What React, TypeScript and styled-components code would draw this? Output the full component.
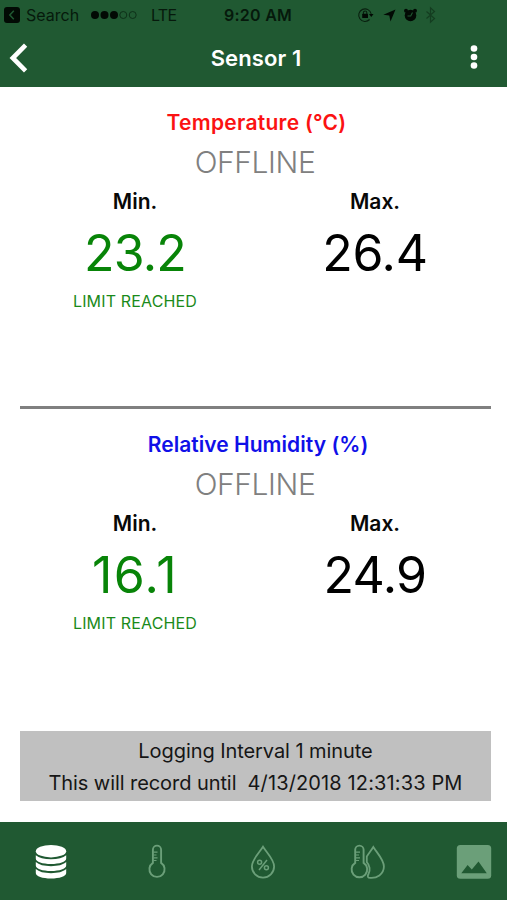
import React from "react";
import styled, { createGlobalStyle } from "styled-components";

const GREEN = "#205932";
const MUTED = "#6b9f79";

const GlobalStyle = createGlobalStyle`
  * { box-sizing: border-box; }
  body { margin: 0; background: #fff; font-family: Inter, "Liberation Sans", sans-serif; }
`;

const Screen = styled.div`
  width: 507px;
  height: 900px;
  display: flex;
  flex-direction: column;
  background: #fff;
  overflow: hidden;
`;

const Header = styled.header`
  height: 87px;
  flex: none;
  background: ${GREEN};
`;

const StatusText = styled.span<{ $spacing?: number; $bold?: boolean }>`
  font-size: 16px;
  line-height: 30px;
  font-weight: ${(p) => (p.$bold ? 600 : 400)};
  letter-spacing: ${(p) => p.$spacing ?? 0}px;
  white-space: nowrap;
`;

const StatusRow = styled.div`
  height: 30px;
  display: flex;
  align-items: center;
  padding-left: 4px;
  color: #06190c;
`;

const StatusSlot = styled.div<{ $width: number }>`
  width: ${(p) => p.$width}px;
  flex: none;
  display: flex;
  align-items: center;
`;

const NavBar = styled.div`
  height: 57px;
  display: grid;
  grid-template-columns: 60px 1fr 60px;
  align-items: center;
`;

const NavButton = styled.button<{ $end?: boolean }>`
  display: flex;
  align-items: center;
  justify-content: ${(p) => (p.$end ? "flex-end" : "flex-start")};
  height: 57px;
  padding: ${(p) => (p.$end ? "0 29px 3px 0" : "0 0 2px 8px")};
  border: 0;
  background: none;
`;

const Title = styled.h1`
  margin: 0;
  padding: 0 0 1px 5px;
  text-align: center;
  color: #fff;
  font-size: 22px;
  font-weight: 600;
  line-height: 30px;
  letter-spacing: 0.1px;
`;

const Main = styled.main`
  flex: 1;
  display: flex;
  flex-direction: column;
`;

const Reading = styled.section`
  height: 319px;
  padding: 20px 12px 0 15px;
  text-align: center;
`;

const ReadingTitle = styled.h2<{ $color: string; $spacing: number; $indent: number }>`
  margin: 0;
  padding-left: ${(p) => p.$indent}px;
  color: ${(p) => p.$color};
  font-size: 21px;
  font-weight: 600;
  line-height: 31px;
  letter-spacing: ${(p) => p.$spacing}px;
`;

const State = styled.p`
  margin: 0;
  color: #808080;
  font-size: 30px;
  font-weight: 300;
  line-height: 48px;
  letter-spacing: -0.4px;
`;

const Limits = styled.div`
  display: grid;
  grid-template-columns: 1fr 1fr;
`;

const Limit = styled.div`
  display: flex;
  flex-direction: column;
  align-items: center;
`;

const LimitName = styled.span`
  font-size: 21px;
  font-weight: 600;
  line-height: 32px;
  color: #080808;
`;

const LimitValue = styled.span<{ $reached?: boolean; $spacing: number }>`
  font-size: 50px;
  line-height: 70px;
  color: ${(p) => (p.$reached ? "#088408" : "#000")};
  letter-spacing: ${(p) => p.$spacing}px;
`;

const LimitNote = styled.span`
  font-size: 16px;
  line-height: 27px;
  color: #1a8a1a;
  letter-spacing: 0.16px;
`;

const Divider = styled.hr`
  width: 471px;
  height: 3px;
  margin: 0 0 0 20px;
  border: 0;
  background: #808080;
`;

const LogBox = styled.div`
  margin: 3px 16px 0 20px;
  height: 70px;
  padding: 4px 0 0;
  background: #c0c0c0;
  color: #161616;
  text-align: center;
`;

const LogLine = styled.p`
  margin: 0;
  font-size: 20px;
  line-height: 32px;
  white-space: pre;
  letter-spacing: -0.07px;
`;

const LogTime = styled.time`
  letter-spacing: 0.13px;
`;

const TabBar = styled.nav`
  height: 78px;
  flex: none;
  display: flex;
  justify-content: space-between;
  padding: 0 13px 0 31px;
  background: ${GREEN};
`;

const Tab = styled.button`
  display: flex;
  align-items: center;
  justify-content: center;
  width: 40px;
  padding: 1px 0 0;
  border: 0;
  background: none;
`;

const BackTile = () => (
  <svg width="16" height="16" viewBox="0 0 16 16">
    <rect width="16" height="16" rx="3" fill="#020a04" />
    <path d="M9.8 3.8 5.8 8l4 4.2" fill="none" stroke={GREEN} strokeWidth="1.5" />
  </svg>
);

const SignalDots = () => (
  <svg width="48" height="10" viewBox="0 0 48 10">
    <g fill="#020a04">
      <circle cx="5" cy="5" r="4" />
      <circle cx="14.5" cy="5" r="4" />
      <circle cx="24" cy="5" r="4" />
    </g>
    <g fill="none" stroke="#0d3018">
      <circle cx="33.3" cy="5" r="3.5" />
      <circle cx="42.7" cy="5" r="3.5" />
    </g>
  </svg>
);

const StatusIcons = () => (
  <svg width="80" height="18" viewBox="0 0 80 18">
    <g fill="none" stroke="#09200f">
      <path d="M12.6 13.5A6.3 6.3 0 1 1 14.2 8" strokeWidth="1.1" />
      <path d="M6.4 8V6.7a1.7 1.7 0 0 1 3.4 0V8" strokeWidth="1.1" />
      <path d="m69.500 5.500 8 7-4 3.700V1.800l4 3.700-8 7" stroke="#143d20" strokeWidth="1.2" />
    </g>
    <g fill="#020a04">
      <path d="M12 8h4.5l-2.2 3z" />
      <rect x="5.2" y="7.8" width="5.8" height="4.2" rx=".5" />
      <path d="m38.5 3.5-5 12-1.2-6-6-.7z" />
      <circle cx="53.500" cy="9.5" r="5.8" />
      <circle cx="49" cy="4.8" r="2" />
      <circle cx="58" cy="4.8" r="2" />
    </g>
    <path d="M50.500 10h3.200l1.800-3.500" fill="none" stroke={GREEN} strokeWidth="1.1" />
  </svg>
);

const BackArrow = () => (
  <svg width="22" height="32" viewBox="0 0 22 32">
    <path d="M17.600 3.200 4.800 16l12.800 12.800" fill="none" stroke="#fff" strokeWidth="4.600" />
  </svg>
);

const MoreDots = () => (
  <svg width="8" height="26" viewBox="0 0 8 26" fill="#fff">
    <circle cx="4" cy="4.5" r="3.3" />
    <circle cx="4" cy="13" r="3.3" />
    <circle cx="4" cy="21.5" r="3.3" />
  </svg>
);

const DatabaseIcon = () => (
  <svg width="32" height="36" viewBox="0 0 32 36" fill="#fff">
    <ellipse cx="16" cy="7.2" rx="15.2" ry="6.2" />
    <path d="M.8 11.2C4 14 9 15.2 16 15.2s12-1.2 15.2-4v3.3c0 3.4-6.8 5.5-15.2 5.5S.8 17.900.8 14.500z" />
    <path d="M.8 18.100C4 21 9 22.200 16 22.200s12-1.200 15.200-4.100v3.300c0 3.400-6.800 5.500-15.200 5.500S.8 24.800.8 21.400z" />
    <path d="M.8 25.100C4 28 9 29.200 16 29.200s12-1.200 15.200-4.100v3.900c0 3.400-6.800 5.500-15.200 5.500S.8 32.400.8 29z" />
  </svg>
);

const ThermometerIcon = () => (
  <svg width="20" height="36" viewBox="0 0 20 36" fill="none" stroke={MUTED}>
    <path d="M5.900 18.900V5.700a4.100 4.100 0 0 1 8.200 0v13.200a7.600 7.600 0 1 1-8.200 0z" strokeWidth="1.900" />
    <path d="M6.500 8.200h4M6.500 11h3M6.500 13.800h4M6.500 16.500h3" strokeWidth="1.200" />
  </svg>
);

const HumidityIcon = () => (
  <svg width="26" height="36" viewBox="0 0 26 36" fill="none" stroke={MUTED}>
    <path d="M13 2.800C9.500 8.500 1.900 15.500 1.900 22.500a11.100 11.100 0 0 0 22.200 0C24.100 15.500 16.500 8.500 13 2.800z" strokeWidth="1.800" />
    <g strokeWidth="1.500">
      <circle cx="9.600" cy="18.300" r="2" />
      <circle cx="16.400" cy="23.700" r="2" />
      <path d="m17 16-8 10" />
    </g>
  </svg>
);

const CombinedIcon = () => (
  <svg width="36" height="36" viewBox="0 0 36 36" fill="none" stroke={MUTED}>
    <path d="M5.200 18.900V5.800a4.200 4.200 0 0 1 8.400 0v13.100a7.800 7.800 0 1 1-8.400 0z" strokeWidth="1.900" />
    <path d="M6 8.200h4M6 11h3M6 13.800h4M6 16.500h3" strokeWidth="1.200" />
    <path d="M23.300 3c-2.200 3.500-4.500 6.300-6.500 9.400v5.700c3 3 3.800 8.500 1.600 12.200-.8 1.300-.8 2.900.2 3.300 8.300 1.400 15.300-3.500 15.300-11C33.900 15.500 27 9 23.300 3z" strokeWidth="1.800" />
  </svg>
);

const PictureIcon = () => (
  <svg width="36" height="36" viewBox="0 0 36 36">
    <rect x=".8" y="1" width="34.400" height="33.700" rx="3.500" fill={MUTED} />
    <path d="m5.300 29.200 6.300-8.300 4.200 4.600 6.700-7.900 8.300 11.600z" fill={GREEN} />
  </svg>
);

interface ReadingData {
  title: string;
  color: string;
  titleSpacing: number;
  titleIndent: number;
  min: string;
  max: string;
  minSpacing: number;
  maxSpacing: number;
}

const readings: ReadingData[] = [
  {
    title: "Temperature (°C)",
    color: "#fb1212",
    titleSpacing: 0.27,
    titleIndent: 3,
    min: "23.2",
    max: "26.4",
    minSpacing: -0.8,
    maxSpacing: -0.2,
  },
  {
    title: "Relative Humidity (%)",
    color: "#1010e8",
    titleSpacing: 0.04,
    titleIndent: 6,
    min: "16.1",
    max: "24.9",
    minSpacing: 1.5,
    maxSpacing: -0.6,
  },
];

const ReadingPanel = ({ data }: { data: ReadingData }) => (
  <Reading>
    <ReadingTitle $color={data.color} $spacing={data.titleSpacing} $indent={data.titleIndent}>
      {data.title}
    </ReadingTitle>
    <State>OFFLINE</State>
    <Limits>
      <Limit>
        <LimitName>Min.</LimitName>
        <LimitValue $reached $spacing={data.minSpacing}>{data.min}</LimitValue>
        <LimitNote>LIMIT REACHED</LimitNote>
      </Limit>
      <Limit>
        <LimitName>Max.</LimitName>
        <LimitValue $spacing={data.maxSpacing}>{data.max}</LimitValue>
      </Limit>
    </Limits>
  </Reading>
);

export default function App() {
  return (
    <>
      <GlobalStyle />
      <Screen>
        <Header>
          <StatusRow>
            <StatusSlot $width={22}><BackTile /></StatusSlot>
            <StatusSlot $width={64}><StatusText>Search</StatusText></StatusSlot>
            <StatusSlot $width={61}><SignalDots /></StatusSlot>
            <StatusSlot $width={73}><StatusText $spacing={-0.7}>LTE</StatusText></StatusSlot>
            <StatusSlot $width={133}><StatusText $bold $spacing={0.25}>9:20 AM</StatusText></StatusSlot>
            <StatusIcons />
          </StatusRow>
          <NavBar>
            <NavButton aria-label="Back"><BackArrow /></NavButton>
            <Title>Sensor 1</Title>
            <NavButton $end aria-label="More"><MoreDots /></NavButton>
          </NavBar>
        </Header>
        <Main>
          <ReadingPanel data={readings[0]} />
          <Divider />
          <ReadingPanel data={readings[1]} />
          <LogBox>
            <LogLine>Logging Interval 1 minute</LogLine>
            <LogLine>{"This will record until  "}<LogTime>4/13/2018 12:31:33 PM</LogTime></LogLine>
          </LogBox>
        </Main>
        <TabBar>
          <Tab aria-label="Data"><DatabaseIcon /></Tab>
          <Tab aria-label="Temperature"><ThermometerIcon /></Tab>
          <Tab aria-label="Humidity"><HumidityIcon /></Tab>
          <Tab aria-label="Temperature and humidity"><CombinedIcon /></Tab>
          <Tab aria-label="Graph"><PictureIcon /></Tab>
        </TabBar>
      </Screen>
    </>
  );
}
